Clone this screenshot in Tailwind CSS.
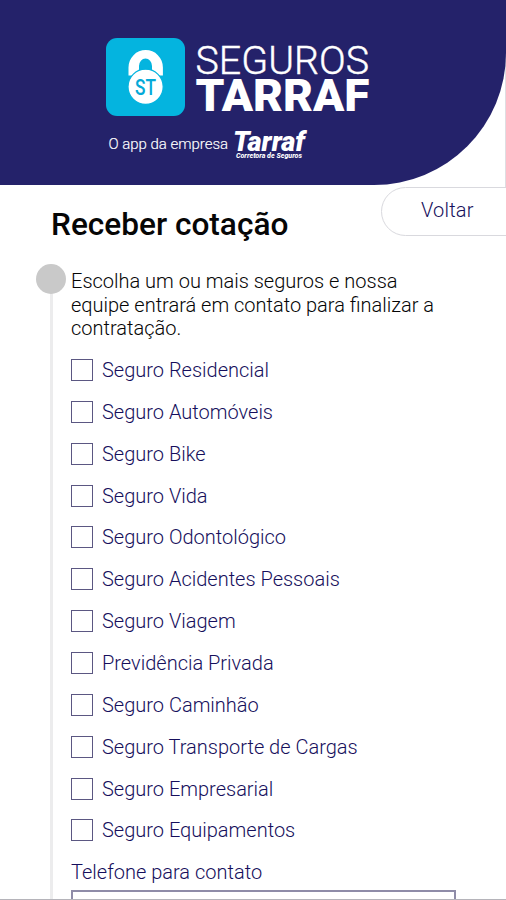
<!DOCTYPE html>
<html lang="pt-BR">
<head>
<meta charset="utf-8">
<title>Seguros Tarraf</title>
<script src="https://cdn.jsdelivr.net/npm/@tailwindcss/browser@4"></script>
</head>
<body class="bg-white">
<div class="relative w-[506px] h-[900px] overflow-hidden bg-white font-['Roboto',sans-serif] font-light text-[20px] text-[#160f5c]">
  <div class="absolute right-0 top-0 w-px h-[187px] bg-[#dedee2]"></div>
  <header class="relative h-[185px] bg-[#24226a] rounded-br-[132px]">
    <div class="flex pt-[38px] pl-[106px]">
      <svg class="w-[79px] h-[78px] shrink-0" viewBox="0 0 79 78">
        <rect width="79" height="78" rx="11" fill="#04b4df"/>
        <path d="M22.500 37.500V29.500a17.200 17.500 0 0 1 34.400 0v8H46V28a6.500 7.500 0 0 0-13 0v9.500Z" fill="#fff"/>
        <circle cx="39.600" cy="48.800" r="17.600" fill="#fff" stroke="#04b4df" stroke-width="1.200"/>
        <text x="29" y="57" textLength="21" lengthAdjust="spacingAndGlyphs" font-family="Roboto, sans-serif" font-size="22.500" font-weight="500" fill="#04a9d8">ST</text>
      </svg>
      <svg class="w-[180px] h-[78px] ml-[9px] overflow-visible" viewBox="0 0 180 78" font-family="Roboto, sans-serif" fill="#fff">
        <text x="1.500" y="35.500" textLength="173.500" lengthAdjust="spacingAndGlyphs" font-size="39.500" font-weight="300" stroke="#fff" stroke-width=".4">SEGUROS</text>
        <text x="1.500" y="73" textLength="174" lengthAdjust="spacingAndGlyphs" font-size="45" font-weight="900">TARRAF</text>
      </svg>
    </div>
    <svg class="w-[220px] h-[40px] ml-[100px] mt-[5px] overflow-visible" viewBox="0 0 220 40" fill="#fff">
      <text x="8.500" y="28" textLength="119.500" font-family="Roboto, sans-serif" font-size="15" font-weight="300" stroke="#fff" stroke-width=".15">O app da empresa</text>
      <text x="133" y="29.500" textLength="72" lengthAdjust="spacingAndGlyphs" font-family="Roboto, sans-serif" font-size="27" font-weight="900" font-style="italic">Tarraf</text>
      <text x="136" y="37.300" textLength="66" lengthAdjust="spacingAndGlyphs" font-family="Roboto, sans-serif" font-size="7.500" font-weight="800" font-style="italic">Corretora de Seguros</text>
    </svg>
  </header>
  <button class="absolute left-[381px] top-[187px] w-[170px] h-[49px] rounded-full border border-[#d9d9de] bg-white pl-[39px] pb-[4px] text-left leading-none tracking-[0.2px]">Voltar</button>
  <main class="relative pl-[71px]">
    <div class="absolute left-[50px] top-[94px] w-[3px] h-[640px] bg-[#ececed]"></div>
    <div class="absolute left-[36px] top-[79px] size-[30px] rounded-full bg-[#c9c9c9]"></div>
    <h1 class="-ml-[20px] pt-[20px] h-[85px] text-[31.600px] leading-[40px] font-medium text-[#060606] whitespace-nowrap">Receber cotação</h1>
    <p class="h-[79px] leading-[23.500px] text-[#050505] whitespace-nowrap">Escolha um ou mais seguros e nossa<br>equipe entrará em contato para finalizar a<br>contratação.</p>
    <ul class="whitespace-nowrap">
      <li><label class="flex items-center h-[41.860px] gap-[9px]"><input type="checkbox" class="appearance-none size-[22px] border border-[#5b5782]">Seguro Residencial</label></li>
      <li><label class="flex items-center h-[41.860px] gap-[9px]"><input type="checkbox" class="appearance-none size-[22px] border border-[#5b5782]">Seguro Automóveis</label></li>
      <li><label class="flex items-center h-[41.860px] gap-[9px]"><input type="checkbox" class="appearance-none size-[22px] border border-[#5b5782]">Seguro Bike</label></li>
      <li><label class="flex items-center h-[41.860px] gap-[9px]"><input type="checkbox" class="appearance-none size-[22px] border border-[#5b5782]">Seguro Vida</label></li>
      <li><label class="flex items-center h-[41.860px] gap-[9px]"><input type="checkbox" class="appearance-none size-[22px] border border-[#5b5782]">Seguro Odontológico</label></li>
      <li><label class="flex items-center h-[41.860px] gap-[9px]"><input type="checkbox" class="appearance-none size-[22px] border border-[#5b5782]">Seguro Acidentes Pessoais</label></li>
      <li><label class="flex items-center h-[41.860px] gap-[9px]"><input type="checkbox" class="appearance-none size-[22px] border border-[#5b5782]">Seguro Viagem</label></li>
      <li><label class="flex items-center h-[41.860px] gap-[9px]"><input type="checkbox" class="appearance-none size-[22px] border border-[#5b5782]">Previdência Privada</label></li>
      <li><label class="flex items-center h-[41.860px] gap-[9px]"><input type="checkbox" class="appearance-none size-[22px] border border-[#5b5782]">Seguro Caminhão</label></li>
      <li><label class="flex items-center h-[41.860px] gap-[9px]"><input type="checkbox" class="appearance-none size-[22px] border border-[#5b5782]">Seguro Transporte de Cargas</label></li>
      <li><label class="flex items-center h-[41.860px] gap-[9px]"><input type="checkbox" class="appearance-none size-[22px] border border-[#5b5782]">Seguro Empresarial</label></li>
      <li><label class="flex items-center h-[41.860px] gap-[9px]"><input type="checkbox" class="appearance-none size-[22px] border border-[#5b5782]">Seguro Equipamentos</label></li>
    </ul>
    <label class="block h-[39px] leading-[42px]" for="telefone">Telefone para contato</label>
    <input id="telefone" type="tel" class="block w-[385px] h-[44px] border-2 border-[#8f8ca8]">
  </main>
  <div class="absolute left-0 bottom-0 w-full h-px bg-[#b5b4ba]"></div>
</div>
</body>
</html>
